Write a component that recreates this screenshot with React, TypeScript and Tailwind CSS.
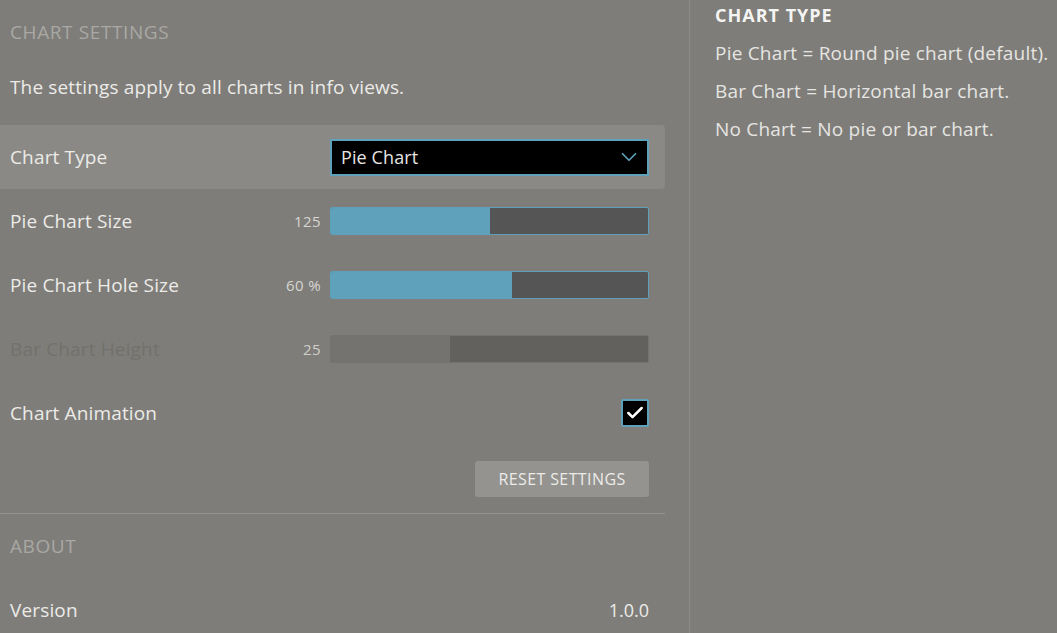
import { ChevronDown, Check } from 'lucide-react'

const font = { fontFamily: '"Open Sans", "Liberation Sans", sans-serif' }

function Slider({ value, pct, disabled }: { value: string; pct: number; disabled?: boolean }) {
  return (
    <div className="flex items-center gap-[9px]">
      <span className={`w-[60px] text-right text-[15px] tracking-[0.4px] ${disabled ? 'text-[#d0cfcb]' : 'text-[#d6d5d1]'}`}>{value}</span>
      <div
        className={`flex h-[28px] w-[319px] overflow-hidden rounded-[2px] border ${
          disabled ? 'border-[#74736f] bg-[#62615e]' : 'border-[#5fa0bb] bg-[#555555]'
        }`}
      >
        <div
          className={disabled ? 'h-full bg-[#74736f]' : 'h-full bg-[#5fa0bb]'}
          style={{ width: `${pct}%` }}
        />
      </div>
    </div>
  )
}

function Row({ label, dim, children }: { label: string; dim?: boolean; children: React.ReactNode }) {
  return (
    <div className="flex h-[64px] items-center justify-between pl-[10px] pr-[16px]">
      <span className={`text-[19px] tracking-[0.15px] ${dim ? 'text-[#72716d]' : 'text-[#ecebe8]'}`}>{label}</span>
      {children}
    </div>
  )
}

export default function App() {
  return (
    <div className="flex h-[633px] w-[1057px] overflow-hidden bg-[#7e7d79] leading-[27px]" style={font}>
      {/* Settings column */}
      <div className="w-[665px] shrink-0">
        <div className="pl-[10px] pt-[19px] text-[19px] tracking-[0.6px] text-[#a9a8a4]">CHART SETTINGS</div>
        <div className="pl-[10px] pt-[28px] text-[19px] tracking-[0.15px] text-[#ecebe8]">The settings apply to all charts in info views.</div>

        <div className="mt-[24px] flex h-[64px] items-center justify-between rounded-r-[4px] bg-[#8a8985] pl-[10px] pr-[16px]">
          <span className="text-[19px] tracking-[0.15px] text-[#ecebe8]">Chart Type</span>
          <div className="flex h-[37px] w-[319px] items-center justify-between border-2 border-[#5fa0bb] bg-black pl-[9px] pr-[5px]">
            <span className="text-[18px] tracking-[0.1px] text-[#e6e5e2]">Pie Chart</span>
            <ChevronDown size={26} strokeWidth={1.6} className="text-[#5fa0bb]" />
          </div>
        </div>

        <Row label="Pie Chart Size">
          <Slider value="125" pct={50} />
        </Row>
        <Row label="Pie Chart Hole Size">
          <Slider value="60 %" pct={57} />
        </Row>
        <Row label="Bar Chart Height" dim>
          <Slider value="25" pct={37.5} disabled />
        </Row>
        <Row label="Chart Animation">
          <div className="flex h-[28px] w-[28px] items-center justify-center rounded-[2px] border-2 border-[#5fa0bb] bg-black">
            <Check size={20} strokeWidth={3} className="text-white" />
          </div>
        </Row>

        <div className="flex justify-end pr-[16px] pt-[16px]">
          <button className="h-[36px] w-[174px] rounded-[3px] bg-[#949390] text-[16px] tracking-[0.4px] text-[#ecebe8]">
            RESET SETTINGS
          </button>
        </div>

        <div className="mt-[16px] border-t border-[#95948f]" />

        <div className="pl-[10px] pt-[19px] text-[19px] tracking-[0.6px] text-[#a9a8a4]">ABOUT</div>
        <div className="mt-[37px] flex items-center justify-between pl-[10px] pr-[16px]">
          <span className="text-[19px] tracking-[0.15px] text-[#ecebe8]">Version</span>
          <span className="text-[18px] text-[#ecebe8]">1.0.0</span>
        </div>
      </div>

      {/* Help column */}
      <div className="ml-[24px] flex-1 border-l border-[#8c8b87] pl-[25px] pt-[2px]">
        <div className="text-[18px] font-bold tracking-[1px] text-[#f4f4f2]">CHART TYPE</div>
        <div className="mt-[11px] flex flex-col gap-[11px] text-[19px] tracking-[0.2px] text-[#e6e5e2]">
          <span>Pie Chart = Round pie chart (default).</span>
          <span>Bar Chart = Horizontal bar chart.</span>
          <span>No Chart = No pie or bar chart.</span>
        </div>
      </div>
    </div>
  )
}
